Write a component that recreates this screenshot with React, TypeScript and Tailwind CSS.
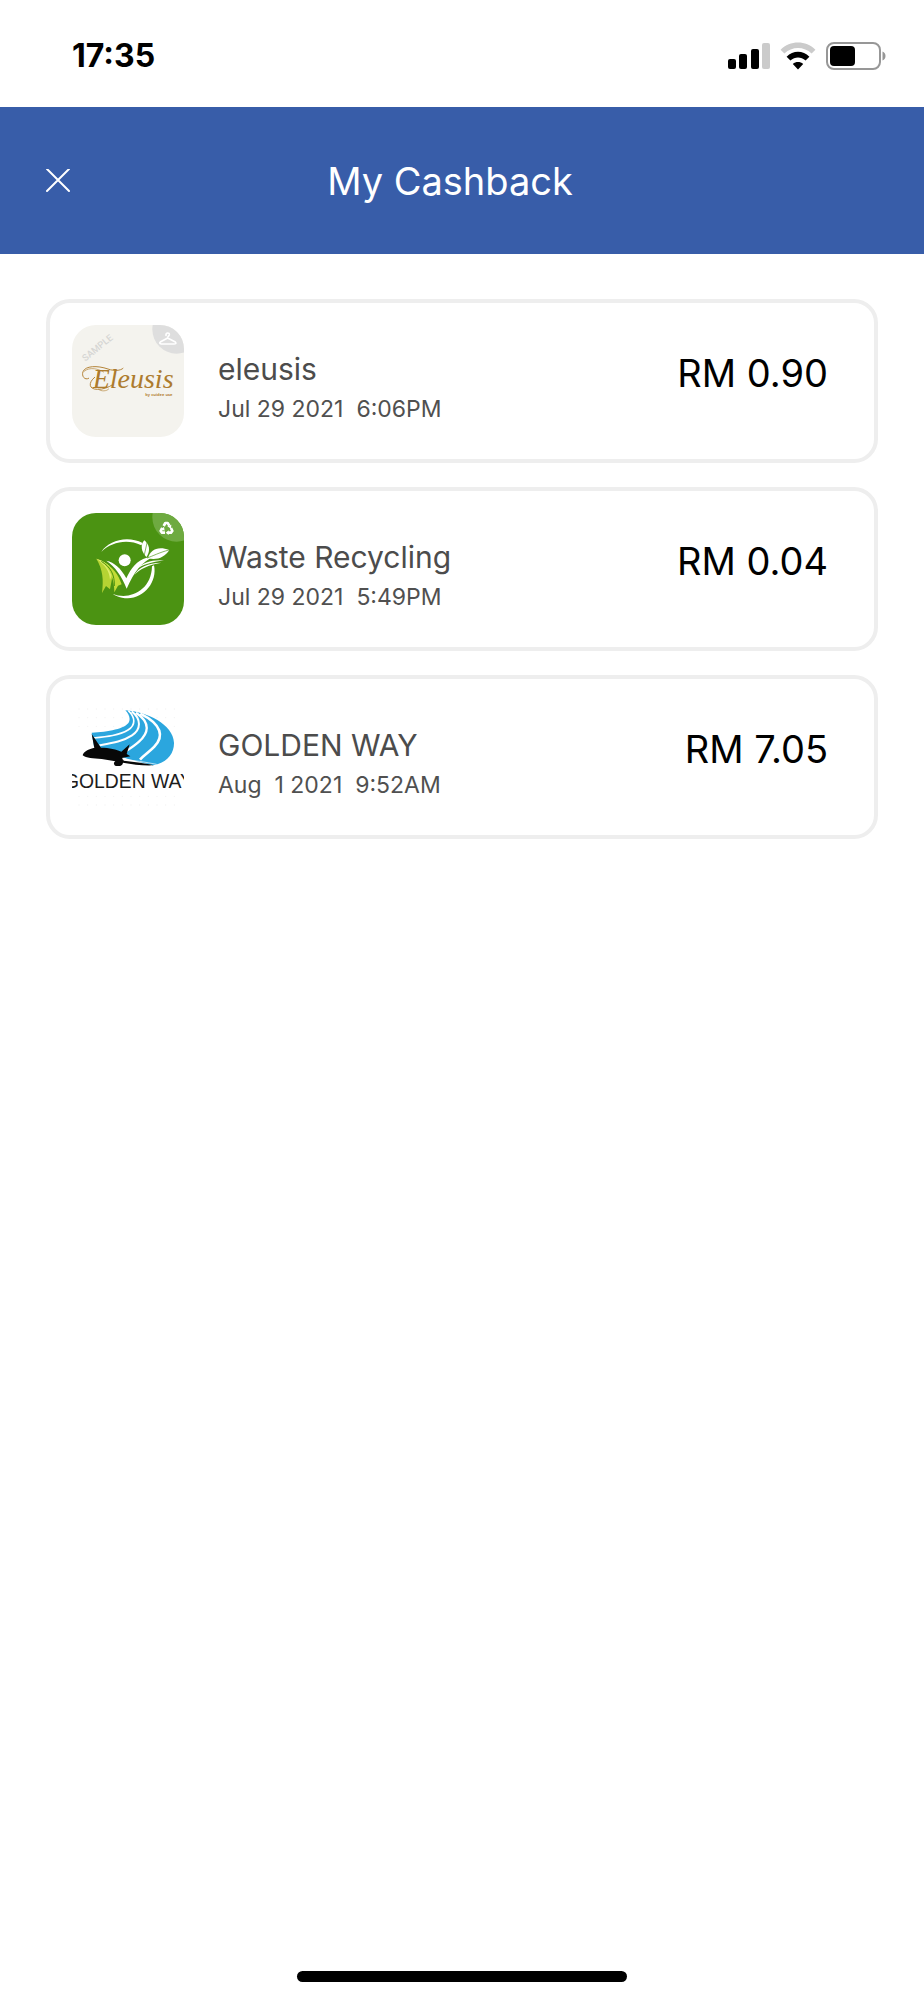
import type { ReactNode } from 'react'

interface Cashback {
  id: string
  name: string
  date: string
  amount: string
  logo: ReactNode
}

function SignalIcon() {
  return (
    <svg viewBox="0 0 42 28" className="h-7 w-[42px]" aria-hidden="true">
      <rect x="0" y="17" width="8" height="10" rx="2" fill="#000" />
      <rect x="11" y="12" width="8" height="15" rx="2" fill="#000" />
      <rect x="23" y="7" width="8" height="20" rx="2" fill="#000" />
      <rect x="34" y="1" width="8" height="26" rx="2" fill="#cbcbcb" />
    </svg>
  )
}

function WifiIcon() {
  return (
    <svg viewBox="0 0 36 28" className="h-7 w-9" aria-hidden="true">
      <path d="M0.6 7.8C10-1.8 26-1.8 35.4 7.8L31.6 11.6C24 4.2 12 4.2 4.4 11.6Z" fill="#cbcbcb" />
      <path d="M6.6 14.8C13 8.2 23 8.2 29.4 14.8L25.6 18.4C21 14.4 15 14.4 10.4 18.4Z" fill="#000" />
      <path d="M12.8 22C15.8 19.4 20.2 19.4 23.2 22L18 27.4Z" fill="#000" />
    </svg>
  )
}

function BatteryIcon() {
  return (
    <svg viewBox="0 0 60 28" className="h-7 w-[60px]" aria-hidden="true">
      <rect x="1" y="1" width="53" height="26" rx="7" fill="#fff" stroke="#979797" strokeWidth="2" />
      <rect x="4" y="4" width="25" height="20" rx="4" fill="#000" />
      <path d="M56.5 9.5C60.5 11 60.5 17 56.5 18.5Z" fill="#979797" />
    </svg>
  )
}

function EleusisLogo() {
  return (
    <svg viewBox="24 21 336 336" className="size-28 rounded-3xl" role="img" aria-label="Eleusis">
      <rect x="24" y="21" width="336" height="336" fill="#f4f3ee" />
      <circle cx="338" cy="34" r="73" fill="#dedede" />
      <path d="M306 52C305 43 317 43 316 50C315 55 311 54 311 60L334 72C338 76 335 78 330 78H292C286 78 286 74 290 71L311 60"
        fill="none" stroke="#fff" strokeWidth="5" strokeLinecap="round" strokeLinejoin="round" />
      <text x="64" y="131" transform="rotate(-39 64 131)" fill="#d6d6d4" fontFamily="Roboto, sans-serif" fontSize="28" fontWeight="500">SAMPLE</text>
      <g fill="none" stroke="#b5853a" strokeLinecap="round">
        <path d="M74 181C62 188 52 174 57 161C64 143 100 142 132 153C151 160 170 158 177 151" strokeWidth="3" />
        <path d="M60 160C78 145 104 153 119 162" strokeWidth="2" />
        <path d="M92 178C72 194 74 214 100 214C118 214 132 209 146 200" strokeWidth="3" />
        <path d="M104 214C112 221 128 220 134 213" strokeWidth="2" />
      </g>
      <text x="86" y="209" fill="#ad7b2d" fontFamily="'Liberation Serif', serif" fontSize="84" fontStyle="italic">Eleusis</text>
      <text x="244" y="233" fill="#b5853a" fontFamily="'Open Sans', sans-serif" fontSize="12" fontWeight="700">by cuidee use</text>
    </svg>
  )
}

function RecyclingLogo() {
  return (
    <svg viewBox="24 21 336 336" className="size-28 rounded-3xl" role="img" aria-label="Waste Recycling">
      <rect x="24" y="21" width="336" height="336" fill="#4b9312" />
      <circle cx="338" cy="34" r="73" fill="#6eaa40" />
      <g fill="none" stroke="#fff" strokeWidth="8" strokeLinejoin="round">
        <path d="M299 60L304 51H311L316 59" />
        <path d="M321 66L325 75L321 80H312" />
        <path d="M303 80H294L290 75L295 66" />
      </g>
      <path d="M310 61L322 56L321 68Z" fill="#fff" />
      <path d="M314 73V87L305 80Z" fill="#fff" />
      <path d="M289 69L300 63L302 74Z" fill="#fff" />
      <path d="M112 138C134 103 190 88 236 111L232 118C190 98 142 108 112 138Z" fill="#fff" />
      <path d="M270 178C282 232 232 288 174 275C162 272 152 268 146 263C190 283 262 259 264 181Z" fill="#fff" />
      <circle cx="182" cy="163" r="18" fill="#fff" />
      <path d="M127 164C151 169 171 187 187 217C202 185 218 164 248 155L274 150C231 167 211 198 188 248C173 211 154 182 127 164Z" fill="#fff" />
      <path d="M247 153C232 138 228 117 241 103C257 116 259 134 249 151Z" fill="#fff" />
      <path d="M252 157C258 131 282 119 316 132C303 153 279 164 252 157Z" fill="#fff" />
      <path d="M240 151L250 106M249 156C267 150 284 140 315 132" stroke="#4b9312" strokeWidth="2" fill="none" />
      <path d="M218 190C235 169 263 161 300 163C262 169 236 175 218 190Z" fill="#fff" />
      <path d="M211 207C223 185 251 170 292 170C252 178 229 187 211 207Z" fill="#fff" />
      <path d="M97 158C120 165 139 177 148 197L138 250L126 240L114 261C119 220 117 193 97 158Z" fill="#b5d333" />
      <path d="M97 158C120 165 139 177 148 197L138 221C136 193 123 177 97 158Z" fill="#ddec6a" />
      <path d="M112 166C147 181 164 208 173 235L162 239L151 259C151 219 138 188 112 166Z" fill="#c3dc37" />
      <path d="M112 166C141 184 152 207 151 240" stroke="#4b9312" strokeWidth="3" fill="none" />
    </svg>
  )
}

function GoldenWayLogo() {
  return (
    <svg viewBox="24 21 336 336" className="size-28" role="img" aria-label="Golden Way">
      <g fill="#f3f3f3">
        {[45, 71, 97, 307, 333].map(y =>
          [45, 71, 97, 123, 149, 175, 201, 227, 253, 279, 305, 331].map(x => <circle key={`${x}-${y}`} cx={x} cy={y} r="2" />)
        )}
      </g>
      <path d="M184 49C248 53 328 91 330 146C331 181 306 208 266 214L190 194L90 158L83 116C132 114 185 104 195 84C200 72 194 60 184 49Z" fill="#2ba6de" />
      <g fill="none" stroke="#fff">
        <path d="M193 50C214 70 216 93 192 108C166 124 130 128 88 132" strokeWidth="5" />
        <path d="M203 52C233 75 231 107 204 124C177 142 145 147 106 154" strokeWidth="6" />
        <path d="M216 56C263 87 252 119 225 143C210 157 197 164 178 177" strokeWidth="7" />
        <path d="M229 59C295 92 300 128 271 158C256 174 240 183 228 197" strokeWidth="8" />
      </g>
      <path d="M56 184C58 174 70 166 91 161L83 120L111 161C136 161 158 166 172 173L197 151L188 180L199 187L174 192L180 200C210 204 243 207 270 214C238 216 207 211 177 206C176 216 166 218 153 215C148 211 149 205 154 202L113 195C87 193 67 193 56 184Z" fill="#080808" />
      <path d="M176 197C210 198 246 205 278 211" stroke="#fff" strokeWidth="2" fill="none" />
      <text x="0" y="281" fill="#1c1c1c" fontFamily="'Liberation Sans', sans-serif" fontSize="58">GOLDEN WAY</text>
    </svg>
  )
}

const CASHBACKS: Cashback[] = [
  { id: 'eleusis',   name: 'eleusis',         date: 'Jul 29 2021  6:06PM', amount: 'RM 0.90', logo: <EleusisLogo /> },
  { id: 'recycling', name: 'Waste Recycling', date: 'Jul 29 2021  5:49PM', amount: 'RM 0.04', logo: <RecyclingLogo /> },
  { id: 'golden',    name: 'GOLDEN WAY',      date: 'Aug  1 2021  9:52AM', amount: 'RM 7.05', logo: <GoldenWayLogo /> },
]

function CashbackCard({ item }: { item: Cashback }) {
  return (
    <li className="flex items-start rounded-3xl border-4 border-[#eeeeee] px-[22px] pt-[22px] pb-[22px]">
      <div className="shrink-0">{item.logo}</div>
      <div className="ml-[34px] min-w-0 flex-1 pt-6">
        <h2 className="text-[30px] leading-10 text-[#4c4c4c]">{item.name}</h2>
        <p className="text-[23px] leading-10 whitespace-pre text-[#505050]">{item.date}</p>
      </div>
      <p className="shrink-0 pt-6 pr-6 text-[38px] leading-12 text-black">{item.amount}</p>
    </li>
  )
}

export default function App() {
  return (
    <div className="flex min-h-screen flex-col bg-white font-['Inter',sans-serif]">
      {/* Status bar */}
      <div className="flex h-[107px] shrink-0 items-center justify-between pt-1 pr-[38px] pl-[72px]">
        <span className="text-[32px] leading-10 font-bold text-black">17:35</span>
        <div className="flex items-center gap-2.5">
          <SignalIcon />
          <WifiIcon />
          <BatteryIcon />
        </div>
      </div>

      {/* Header */}
      <header className="grid h-[147px] shrink-0 grid-cols-[48px_1fr_72px] items-center bg-[#385da9] px-[34px] text-white">
        <button type="button" aria-label="Close" className="flex size-12 items-center justify-center">
          <svg viewBox="0 0 24 24" className="size-6" fill="none" stroke="currentColor" strokeWidth="2" strokeLinecap="round">
            <path d="M1 0L23 22M23 0L1 22" />
          </svg>
        </button>
        <h1 className="text-center text-[38px] leading-12">My Cashback</h1>
      </header>

      {/* Cashback list */}
      <main className="flex-1 px-[46px] pt-[45px]">
        <ul className="flex flex-col gap-6">
          {CASHBACKS.map(item => <CashbackCard key={item.id} item={item} />)}
        </ul>
      </main>

      {/* Home indicator */}
      <div className="flex shrink-0 justify-center pb-[18px]">
        <div className="h-[11px] w-[330px] rounded-full bg-black" />
      </div>
    </div>
  )
}
